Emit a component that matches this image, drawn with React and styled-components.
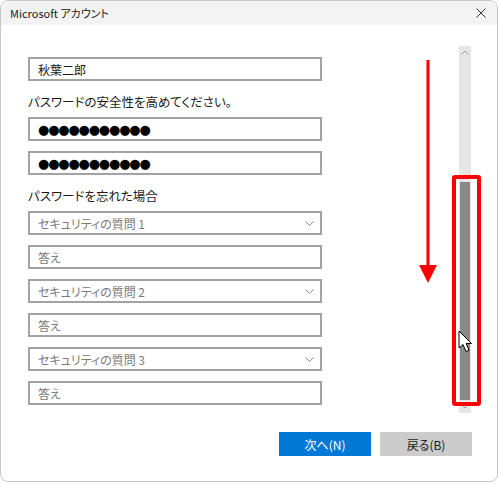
import React from "react";
import styled, { createGlobalStyle } from "styled-components";

const Global = createGlobalStyle`
  html, body { margin: 0; padding: 0; background: #fff; }
  body { font-family: "Noto Sans CJK JP", "Noto Sans", sans-serif; }
  * { box-sizing: border-box; }
`;

const Window = styled.div`
  position: relative;
  width: 498px;
  height: 482px;
  border: 1px solid #c6c6c6;
  border-radius: 8px;
  overflow: hidden;
  background: #fff;
  display: flex;
  flex-direction: column;
`;

const TitleBar = styled.div`
  height: 24px;
  background: #f3f3f3;
  display: flex;
  align-items: center;
  justify-content: space-between;
  padding: 0 10px 0 9px;
  font-size: 11px;
  color: #1a1a1a;
  font-feature-settings: "palt";
`;

const CloseBtn = styled.div`
  display: flex;
  align-items: center;
  justify-content: center;
  width: 12px;
  height: 12px;
`;

const Main = styled.div`
  display: flex;
  justify-content: space-between;
  align-items: flex-start;
  padding: 21px 26px 0 27px;
`;

const Form = styled.div`
  width: 294px;
  margin-top: 11px;
  display: flex;
  flex-direction: column;
  gap: 10px;
`;

const Label = styled.div`
  font-size: 12.5px;
  line-height: 18px;
  color: #1a1a1a;
  font-feature-settings: "palt";
  margin: 2px 0 -4px;
`;

const Field = styled.div`
  height: 24px;
  width: 100%;
  border: 2px solid #a2a2a2;
  background: #fff;
  display: flex;
  align-items: center;
  justify-content: space-between;
  padding: 0 ${(p) => (p.$select ? 6 : 8)}px 0 8px;
  font-size: 12px;
  color: ${(p) => (p.$muted ? "#7a7a7a" : "#1a1a1a")};
  font-feature-settings: "palt";
  white-space: nowrap;
`;

const Dots = styled.span`
  font-family: "DejaVu Sans", sans-serif;
  font-size: 13px;
  letter-spacing: -1.2px;
  color: #000;
`;

const Track = styled.div`
  width: 12px;
  height: 367px;
  background: #e6e6e6;
  display: flex;
  flex-direction: column;
  align-items: center;
`;

const ArrowBtn = styled.div`
  height: ${(p) => p.$h}px;
  width: 12px;
  display: flex;
  align-items: center;
  justify-content: center;
`;

const TrackSpace = styled.div`
  flex: 1;
`;

const Thumb = styled.div`
  width: 10px;
  height: ${(p) => p.$h}px;
  background: #898989;
`;

const Footer = styled.div`
  display: flex;
  justify-content: flex-end;
  gap: 9px;
  padding: 19px 25px 0 0;
`;

const Button = styled.div`
  width: 92px;
  height: 24px;
  display: flex;
  align-items: center;
  justify-content: center;
  font-size: 12px;
  font-feature-settings: "palt";
  background: ${(p) => (p.$primary ? "#0078d4" : "#cccccc")};
  color: ${(p) => (p.$primary ? "#ffffff" : "#1a1a1a")};
`;

const RedBox = styled.div`
  position: absolute;
  left: 451px;
  top: 174px;
  width: 29px;
  height: 231px;
  border: 4px solid #ff0000;
  border-radius: 3px;
`;

const Overlay = styled.svg`
  position: absolute;
  left: ${(p) => p.$x}px;
  top: ${(p) => p.$y}px;
  overflow: visible;
`;

const Chevron = ({ up }) => (
  <svg width="8" height="5" viewBox="0 0 8 5">
    <path d={up ? "M0.5 4.5 L4 1 L7.5 4.5" : "M0.5 0.5 L4 4 L7.5 0.5"} fill="none" stroke="#9a9a9a" strokeWidth="1" />
  </svg>
);

const SelectField = ({ children }) => (
  <Field $muted $select>
    <span>{children}</span>
    <svg width="9" height="5" viewBox="0 0 9 5">
      <path d="M0.5 0.5 L4.5 4.5 L8.5 0.5" fill="none" stroke="#8a8a8a" strokeWidth="1" />
    </svg>
  </Field>
);

export default function App() {
  return (
    <>
      <Global />
      <Window>
        <TitleBar>
          <span>Microsoft アカウント</span>
          <CloseBtn>
            <svg width="10" height="10" viewBox="0 0 10 10">
              <path d="M0.5 0.5 L9.5 9.5 M9.5 0.5 L0.5 9.5" stroke="#333" strokeWidth="1" />
            </svg>
          </CloseBtn>
        </TitleBar>
        <Main>
          <Form>
            <Field>秋葉二郎</Field>
            <Label>パスワードの安全性を高めてください。</Label>
            <Field>
              <Dots>●●●●●●●●●●●</Dots>
            </Field>
            <Field>
              <Dots>●●●●●●●●●●●</Dots>
            </Field>
            <Label>パスワードを忘れた場合</Label>
            <SelectField>セキュリティの質問 1</SelectField>
            <Field $muted>答え</Field>
            <SelectField>セキュリティの質問 2</SelectField>
            <Field $muted>答え</Field>
            <SelectField>セキュリティの質問 3</SelectField>
            <Field $muted>答え</Field>
          </Form>
          <Track>
            <ArrowBtn $h={13}>
              <Chevron up />
            </ArrowBtn>
            <TrackSpace />
            <Thumb $h={218} />
            <ArrowBtn $h={13}>
              <Chevron />
            </ArrowBtn>
          </Track>
        </Main>
        <Footer>
          <Button $primary>次へ(N)</Button>
          <Button>戻る(B)</Button>
        </Footer>
        <Overlay $x={416} $y={59} width="22" height="224" viewBox="0 0 22 224">
          <rect x="9.5" y="0" width="3" height="208" fill="#ff0000" />
          <polygon points="2,205 20,205 11,223" fill="#ff0000" />
        </Overlay>
        <RedBox />
        <Overlay $x={457} $y={329} width="16" height="24" viewBox="0 0 16 24">
          <path d="M1 1 L1 18 L5 14.5 L8 21.5 L11 20.2 L8.2 13.5 L13.5 13.5 Z" fill="#fff" stroke="#000" strokeWidth="1" strokeLinejoin="round" />
        </Overlay>
      </Window>
    </>
  );
}
